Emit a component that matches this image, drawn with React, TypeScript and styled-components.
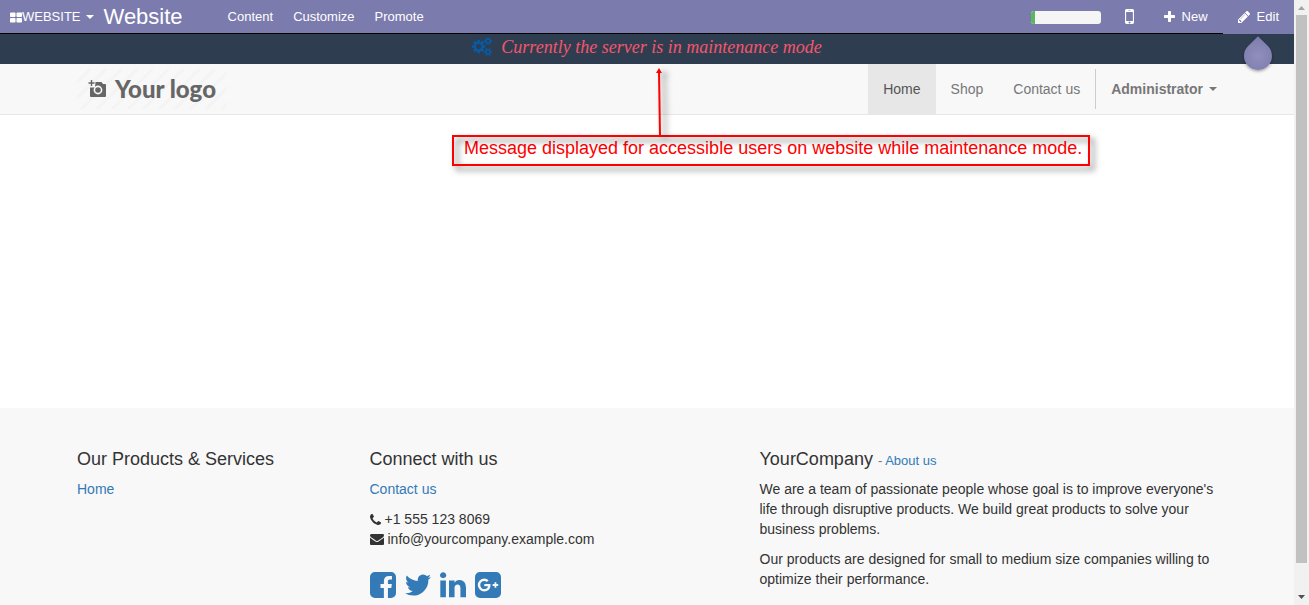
import React from "react";
import styled, { createGlobalStyle, css } from "styled-components";

const GlobalStyle = createGlobalStyle`
  *, *::before, *::after { box-sizing: border-box; }
  body {
    margin: 0;
    font-family: "Liberation Sans", Arial, sans-serif;
    font-size: 14px;
    line-height: 20px;
    color: #333;
    background: #fff;
  }
  a { color: #337ab7; text-decoration: none; }
  button { font: inherit; color: inherit; background: none; border: 0; padding: 0; cursor: pointer; }
`;

/* ---------- icons ---------- */

type IconName =
  | "apps" | "mobile" | "plus" | "pencil" | "cogs" | "phone"
  | "envelope" | "facebook" | "twitter" | "linkedin" | "google";

const SMALL_COG = (top: string) =>
  `M1856 ${top}v140q0 16-149 31-12 27-30 52 51 113 51 138 0 4-4 7-122 71-124 71-8 0-46-47t-52-68q-20 2-30 2t-30-2q-14 21-52 68t-46 47q-2 0-124-71-4-3-4-7 0-25 51-138-18-25-30-52-149-15-149-31v-140q0-16 149-31 13-29 30-52-51-113-51-138 0-4 4-7 4-2 35-20t59-34 30-16q8 0 46 46.5t52 67.5q20-2 30-2t30 2q51-71 92-112l6-2q4 0 124 70 4 3 4 7 0 25-51 138 17 23 30 52 149 15 149 31z`;

const ICONS: Record<IconName, { box: string; d: string }> = {
  apps: {
    box: "64 128 1664 1408",
    d: "M832 1024v384q0 52-38 90t-90 38h-512q-52 0-90-38t-38-90v-384q0-52 38-90t90-38h512q52 0 90 38t38 90zm0-768v384q0 52-38 90t-90 38h-512q-52 0-90-38t-38-90v-384q0-52 38-90t90-38h512q52 0 90 38t38 90zm896 768v384q0 52-38 90t-90 38h-512q-52 0-90-38t-38-90v-384q0-52 38-90t90-38h512q52 0 90 38t38 90zm0-768v384q0 52-38 90t-90 38h-512q-52 0-90-38t-38-90v-384q0-52 38-90t90-38h512q52 0 90 38t38 90z",
  },
  mobile: {
    box: "512 256 768 1280",
    d: "M976 1408q0-33-23.5-56.5t-56.5-23.5-56.5 23.5-23.5 56.5 23.5 56.5 56.5 23.5 56.5-23.5 23.5-56.5zm208-160v-704q0-13-9.5-22.5t-22.5-9.5h-512q-13 0-22.5 9.5t-9.5 22.5v704q0 13 9.5 22.5t22.5 9.5h512q13 0 22.5-9.5t9.5-22.5zm-192-848q0-16-16-16h-160q-16 0-16 16t16 16h160q16 0 16-16zm288-16v1024q0 52-38 90t-90 38h-512q-52 0-90-38t-38-90v-1024q0-52 38-90t90-38h512q52 0 90 38t38 90z",
  },
  plus: {
    box: "192 128 1408 1408",
    d: "M1600 736v192q0 40-28 68t-68 28h-416v416q0 40-28 68t-68 28h-192q-40 0-68-28t-28-68v-416h-416q-40 0-68-28t-28-68v-192q0-40 28-68t68-28h416v-416q0-40 28-68t68-28h192q40 0 68 28t28 68v416h416q40 0 68 28t28 68z",
  },
  pencil: {
    box: "128 149 1515 1515",
    d: "M491 1536l91-91-235-235-91 91v107h128v128h107zm523-928q0-22-22-22-10 0-17 7l-542 542q-7 7-7 17 0 22 22 22 10 0 17-7l542-542q7-7 7-17zm-54-192l416 416-832 832h-416v-416zm683 96q0 53-37 90l-166 166-416-416 166-165q36-38 90-38 53 0 91 38l235 234q37 39 37 91z",
  },
  cogs: {
    box: "-64 0 1920 1792",
    d:
      "M832 896q0-106-75-181t-181-75-181 75-75 181 75 181 181 75 181-75 75-181zm768 512q0-52-38-90t-90-38-90 38-38 90q0 53 37.5 90.5t90.5 37.5 90.5-37.5 37.5-90.5zm0-1024q0-52-38-90t-90-38-90 38-38 90q0 53 37.5 90.5t90.5 37.5 90.5-37.5 37.5-90.5zm-384 421v185q0 10-7 19.5t-16 10.5l-155 24q-11 35-32 76 34 48 90 115 7 11 7 20 0 12-7 19-23 30-82.5 89.5t-78.5 59.5q-11 0-21-7l-115-90q-37 19-77 31-11 108-23 155-7 24-30 24h-186q-11 0-20-7.5t-10-17.5l-23-153q-34-10-75-31l-118 89q-7 7-20 7-11 0-21-8-144-133-144-160 0-9 7-19 10-14 41-53t47-61q-23-44-35-82l-152-24q-10-1-17-9.5t-7-19.5v-185q0-10 7-19.5t16-10.5l155-24q11-35 32-76-34-48-90-115-7-11-7-20 0-12 7-20 22-30 82-89t79-59q11 0 21 7l115 90q34-18 77-32 11-108 23-154 7-24 30-24h186q11 0 20 7.5t10 17.5l23 153q34 10 75 31l118-89q8-7 20-7 11 0 21 8 144 133 144 160 0 8-7 19-12 16-42 54t-45 60q23 48 34 82l152 23q10 2 17 10.5t7 19.5z" +
      SMALL_COG("1338") +
      SMALL_COG("314"),
  },
  phone: {
    box: "192 128 1408 1408",
    d: "M1600 1240q0 27-10 70.5t-21 68.5q-21 50-122 106-94 51-186 51-27 0-53-3.5t-57.5-12.5-47-14.5-55.5-20.5-49-18q-98-35-175-83-127-79-264-216t-216-264q-48-77-83-175-3-9-18-49t-20.5-55.5-14.5-47-12.5-57.5-3.5-53q0-92 51-186 56-101 106-122 25-11 68.5-21t70.5-10q14 0 21 3 18 6 53 76 11 19 30 54t35 63.5 31 53.5q3 4 17.5 25t21.5 35.5 7 28.5q0 20-28.5 50t-62 55-62 53-28.5 46q0 9 5 22.5t8.5 20.5 14 24 11.5 19q76 137 174 235t235 174q2 1 19 11.5t24 14 20.5 8.5 22.5 5q18 0 46-28.5t53-62 55-62 50-28.5q14 0 28.5 7t35.5 21.5 25 17.5q25 15 53.5 31t63.5 35 54 30q70 35 76 53 3 7 3 21z",
  },
  envelope: {
    box: "0 256 1792 1408",
    d: "M1792 710v794q0 66-47 113t-113 47h-1472q-66 0-113-47t-47-113v-794q44 49 101 87 362 246 497 345 57 42 92.5 65.5t94.5 48 110 24.5h2q51 0 110-24.5t94.5-48 92.5-65.5q170-123 498-345 57-39 100-87zm0-294q0 79-49 151t-122 123q-376 261-468 325-10 7-42.5 31t-54 38.5-52 32.5-57.5 27-50 9h-2q-23 0-50-9t-57.5-27-52-32.5-54-38.5-42.5-31q-91-64-262-182.5t-205-142.5q-62-42-117-115.5t-55-136.5q0-78 41.5-130t118.5-52h1472q65 0 112.5 47t47.5 113z",
  },
  facebook: {
    box: "128 128 1536 1536",
    d: "M1376 128q119 0 203.5 84.5t84.5 203.5v960q0 119-84.5 203.5t-203.5 84.5h-188v-595h199l30-232h-229v-148q0-56 23.5-84t91.5-28l122-1v-207q-63-9-178-9-136 0-217.5 80t-81.5 226v171h-200v232h200v595h-532q-119 0-203.5-84.5t-84.5-203.5v-960q0-119 84.5-203.5t203.5-84.5h960z",
  },
  twitter: {
    box: "108 128 1576 1536",
    d: "M1684 408q-67 98-162 167 1 14 1 42 0 130-38 259.5t-115.5 248.5-184.5 210.5-258 146-323 54.5q-271 0-496-145 35 4 78 4 225 0 401-138-105-2-188-64.5t-114-159.5q33 5 61 5 43 0 85-11-112-23-185.5-111.5t-73.5-205.5v-4q68 38 146 41-66-44-105-115t-39-154q0-88 44-163 121 149 294.5 238.5t371.5 99.5q-8-38-8-74 0-134 94.5-228.5t228.5-94.5q140 0 236 102 109-21 205-78-37 115-142 178 93-10 186-50z",
  },
  linkedin: {
    box: "128 128 1536 1536",
    d: "M477 625v991h-330v-991h330zm21-306q1 73-50.5 122t-135.5 49h-2q-82 0-132-49t-50-122q0-74 51.5-122.5t134.5-48.5 133 48.5 51 122.5zm1166 729v568h-329v-530q0-105-40.5-164.5t-126.5-59.5q-63 0-105.5 34.5t-63.5 85.5q-11 30-11 81v553h-329q2-399 2-647t-1-296l-1-48h329v144h-2q20-32 41-56t56.5-52 87-43.5 114.5-15.5q171 0 275 113.5t104 332.5z",
  },
  google: {
    box: "128 128 1536 1536",
    d: "M1045 905q0-26-6-64h-362v132h217q-3 24-16.5 50t-37.5 53-66.5 44.5-96.5 17.5q-99 0-169-71t-70-171 70-171 169-71q92 0 153 59l104-101q-108-100-257-100-160 0-272 112.5t-112 271.5 112 271.5 272 112.5q165 0 266.5-105t101.5-270zm345 46h109v-110h-109v-110h-110v110h-110v110h110v110h110v-110zm274-535v960q0 119-84.5 203.5t-203.5 84.5h-960q-119 0-203.5-84.5t-84.5-203.5v-960q0-119 84.5-203.5t203.5-84.5h960q119 0 203.5 84.5t84.5 203.5z",
  },
};

const Icon = ({ name, w, h = w }: { name: IconName; w: number; h?: number }) => (
  <svg width={w} height={h} viewBox={ICONS[name].box} fill="currentColor" aria-hidden="true">
    <path d={ICONS[name].d} />
  </svg>
);

/* ---------- frame ---------- */

const Shell = styled.div`
  display: grid;
  grid-template-columns: minmax(0, 1fr) 15px;
  height: 100vh;
`;

const Page = styled.div`
  display: flex;
  flex-direction: column;
  overflow: hidden;
`;

const ScrollTrack = styled.div`
  display: flex;
  flex-direction: column;
  align-items: center;
  background: #f1f1f1;
  padding: 0 2px;
`;

const ScrollArrow = styled.svg`
  flex: none;
  width: 9px;
  height: 15px;
`;

const ScrollThumb = styled.div`
  flex: 548 1 0;
  align-self: stretch;
  background: #c1c1c1;
`;

const ScrollRest = styled.div`
  flex: 27 1 0;
`;

const Container = styled.div`
  width: 100%;
  max-width: 1170px;
  margin: 0 auto;
`;

const Caret = styled.span`
  border-top: 4px solid;
  border-left: 4px solid transparent;
  border-right: 4px solid transparent;
`;

/* ---------- editor bar ---------- */

const EditorBar = styled.header`
  flex: none;
  position: relative;
  z-index: 2;
  display: flex;
  justify-content: space-between;
  height: 34px;
  background: #7c7bad;
  box-shadow: inset 0 -1px #000;
  color: #fff;
  font-size: 13px;
`;

const BarGroup = styled.div`
  display: flex;
  align-items: center;
`;

const AppMenu = styled.button`
  display: flex;
  align-items: center;
  padding: 0 10px;

  ${Caret} { margin-left: 5px; }
`;

const AppTitle = styled.span`
  font-size: 22px;
  margin-right: 35px;
`;

const BarButton = styled.button<{ $gutter: number }>`
  display: flex;
  align-items: center;
  gap: 7px;
  height: 34px;
  padding: 0 ${(p) => p.$gutter}px;

  svg { margin-bottom: 1px; }
`;

const EditButton = styled(BarButton)`
  position: relative;
  background: #7c7bad;
`;

const Progress = styled.div`
  width: 70px;
  height: 13px;
  margin-right: 9px;
  border-radius: 3px;
  overflow: hidden;
  background: #f5f5f5;
`;

const ProgressFill = styled.div`
  height: 100%;
  background: #5cb85c;
`;

const TipDrop = styled.span`
  position: absolute;
  top: 42px;
  left: 21px;
  width: 28px;
  height: 28px;
  border-radius: 0 50% 50% 50%;
  transform: rotate(45deg);
  background: radial-gradient(#918fba, #7c7bad);
  box-shadow: 1px 1px 3px rgba(0, 0, 0, 0.35);
`;

/* ---------- maintenance banner ---------- */

const Banner = styled.div`
  flex: none;
  display: flex;
  justify-content: center;
  gap: 9px;
  height: 30px;
  padding-top: 3px;
  background: #2f3d50;
  color: #f4566c;
  font-family: "Liberation Serif", "Times New Roman", serif;
  font-size: 18px;
  font-style: italic;

  svg { color: #075aa3; }
`;

/* ---------- site navigation ---------- */

const SiteNav = styled.nav`
  flex: none;
  background: #f8f8f8;
  border-bottom: 1px solid #e7e7e7;

  ${Container} {
    display: flex;
    justify-content: space-between;
    height: 50px;
  }
`;

const Logo = styled.a`
  display: flex;
  align-items: center;
  gap: 8px;
  width: 150px;
  margin: 5px 15px;
  padding-left: 11px;
  color: #666;
  font-family: Lato, sans-serif;
  font-size: 24px;
  font-weight: 900;
  white-space: nowrap;
  background: repeating-linear-gradient(135deg, #f8f8f8 0 8px, #f4f4f4 8px 11px);
`;

const NavItems = styled.div`
  display: flex;
`;

const NavLink = styled.a<{ $active?: boolean }>`
  padding: 15px;
  color: #777;
  ${(p) => p.$active && css`
    color: #555;
    background: #e7e7e7;
  `}
`;

const UserMenu = styled.button`
  display: flex;
  align-items: center;
  gap: 6px;
  margin: 5px 0;
  padding: 0 15px;
  border-left: 1px solid #ccc;
  color: #777;
  font-weight: bold;
`;

/* ---------- content and annotation ---------- */

const Content = styled.main`
  flex: none;
  position: relative;
  height: 293px;
  background: #fff;
`;

const CalloutArrow = styled.svg`
  position: absolute;
  z-index: 1;
  top: -49px;
  left: calc(50% + 3px);
  filter: drop-shadow(5px 3px 3px rgba(0, 0, 0, 0.5));
`;

const Callout = styled.p`
  position: absolute;
  top: 20px;
  left: calc(50% - 195px);
  margin: 0;
  padding: 1px 8px 6px 12px;
  line-height: 24px;
  color: #f00;
  font-size: 18px;
  white-space: nowrap;

  &::before {
    content: "";
    position: absolute;
    inset: 0;
    border: 2px solid #f00;
    filter: drop-shadow(4px 4px 3px rgba(0, 0, 0, 0.6));
  }
`;

/* ---------- footer ---------- */

const Footer = styled.footer`
  flex: 1 0 auto;
  padding-top: 41px;
  background: #f8f8f8;

  ${Container} {
    display: grid;
    grid-template-columns: 3fr 4fr 5fr;
  }
`;

const Column = styled.section`
  padding: 0 15px;
`;

const Heading = styled.h4`
  margin: 0 0 10px;
  font-size: 18px;
  font-weight: normal;
  line-height: 20px;

  small {
    font-size: 13px;
    line-height: 1;
    color: #777;
  }
`;

const Paragraph = styled.p`
  margin: 0 0 10px;
`;

const ContactLine = styled.div`
  display: flex;
  align-items: center;
  gap: 4px;
`;

const Social = styled.div`
  display: flex;
  gap: 9px;
  margin-top: 23px;

  a { display: flex; }
`;

const SOCIAL: { name: IconName; label: string }[] = [
  { name: "facebook", label: "Facebook" },
  { name: "twitter", label: "Twitter" },
  { name: "linkedin", label: "LinkedIn" },
  { name: "google", label: "Google Plus" },
];

export default function App() {
  const progress = 7;

  return (
    <Shell>
      <GlobalStyle />
      <Page>
        <EditorBar>
          <BarGroup>
            <AppMenu>
              <Icon name="apps" w={12} h={11} />
              WEBSITE
              <Caret />
            </AppMenu>
            <AppTitle>Website</AppTitle>
            <BarButton $gutter={10}>Content</BarButton>
            <BarButton $gutter={10}>Customize</BarButton>
            <BarButton $gutter={10}>Promote</BarButton>
          </BarGroup>
          <BarGroup>
            <Progress role="progressbar" aria-label="Setup progress" aria-valuenow={progress}>
              <ProgressFill style={{ width: `${progress}%` }} />
            </Progress>
            <BarButton $gutter={15} aria-label="Mobile preview">
              <Icon name="mobile" w={9} h={15} />
            </BarButton>
            <BarButton $gutter={15}>
              <Icon name="plus" w={11} />
              New
            </BarButton>
            <EditButton $gutter={15}>
              <Icon name="pencil" w={12} />
              Edit
              <TipDrop />
            </EditButton>
          </BarGroup>
        </EditorBar>

        <Banner role="status">
          <Icon name="cogs" w={20} h={19} />
          Currently the server is in maintenance mode
        </Banner>

        <SiteNav>
          <Container>
            <Logo href="#">
              <svg width="19" height="19" viewBox="0 0 19 19" fill="none" aria-hidden="true">
                <path d="M3.500 0v6M0.500 3h6" stroke="#666" strokeWidth="1.400" />
                <path d="M7.500 2h6l1.500 2h2q1 0 1 1v11q0 1-1 1H3q-1 0-1-1V7.500h5z" fill="#666" />
                <circle cx="10" cy="10" r="3.600" stroke="#f8f8f8" strokeWidth="1.600" />
              </svg>
              Your logo
            </Logo>
            <NavItems>
              <NavLink href="#" $active>Home</NavLink>
              <NavLink href="#">Shop</NavLink>
              <NavLink href="#">Contact us</NavLink>
              <UserMenu>
                Administrator
                <Caret />
              </UserMenu>
            </NavItems>
          </Container>
        </SiteNav>

        <Content>
          <Callout>Message displayed for accessible users on website while maintenance mode.</Callout>
          <CalloutArrow width="20" height="70" viewBox="0 0 20 70" aria-hidden="true">
            <path d="M9 5l1 65" stroke="#f00" strokeWidth="2" />
            <path d="M9 2l3 5H6z" fill="#f00" />
          </CalloutArrow>
        </Content>

        <Footer>
          <Container>
            <Column>
              <Heading>Our Products &amp; Services</Heading>
              <a href="#">Home</a>
            </Column>
            <Column>
              <Heading>Connect with us</Heading>
              <Paragraph><a href="#">Contact us</a></Paragraph>
              <ContactLine><Icon name="phone" w={11} />+1 555 123 8069</ContactLine>
              <ContactLine><Icon name="envelope" w={14} h={11} />info@yourcompany.example.com</ContactLine>
              <Social>
                {SOCIAL.map((s) => (
                  <a key={s.name} href="#" aria-label={s.label}>
                    <Icon name={s.name} w={26} />
                  </a>
                ))}
              </Social>
            </Column>
            <Column>
              <Heading>
                YourCompany <small>- <a href="#">About us</a></small>
              </Heading>
              <Paragraph>
                We are a team of passionate people whose goal is to improve everyone's life through
                disruptive products. We build great products to solve your business problems.
              </Paragraph>
              <Paragraph>
                Our products are designed for small to medium size companies willing to optimize
                their performance.
              </Paragraph>
            </Column>
          </Container>
        </Footer>
      </Page>

      <ScrollTrack aria-hidden="true">
        <ScrollArrow viewBox="0 0 9 15"><path d="M1 10h7L4.500 6z" fill="#a3a3a3" /></ScrollArrow>
        <ScrollThumb />
        <ScrollRest />
        <ScrollArrow viewBox="0 0 9 15"><path d="M1 5h7L4.500 9z" fill="#505050" /></ScrollArrow>
      </ScrollTrack>
    </Shell>
  );
}
